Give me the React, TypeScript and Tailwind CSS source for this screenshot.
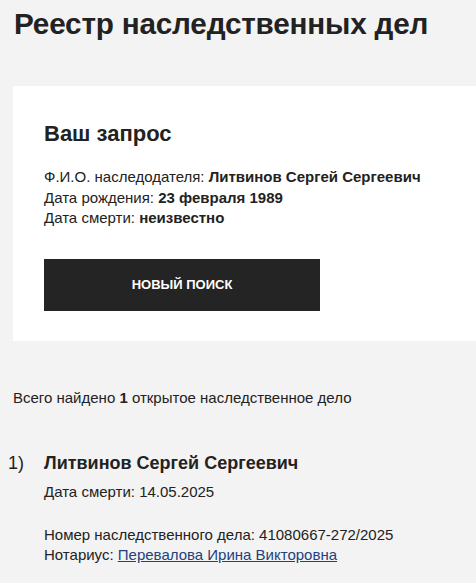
import React from 'react';

const App: React.FC = () => {
  return (
    <div className="min-h-screen bg-[#f3f3f3] text-[#222] font-['Liberation_Sans',Arial,sans-serif] overflow-hidden">
      <h1 className="pl-[14px] pt-[6px] text-[29.7px] leading-[36px] font-bold tracking-[-0.2px] text-[#222]">
        Реестр наследственных дел
      </h1>

      <section className="mt-[44px] ml-[13px] bg-white pl-[31px] pt-[34px] pb-[30px]">
        <h2 className="text-[22px] leading-[28px] font-bold">Ваш запрос</h2>
        <div className="mt-[19px] text-[15px] leading-[20.5px]">
          <p>
            Ф.И.О. наследодателя: <b>Литвинов Сергей Сергеевич</b>
          </p>
          <p>
            Дата рождения: <b>23 февраля 1989</b>
          </p>
          <p>
            Дата смерти: <b>неизвестно</b>
          </p>
        </div>
        <button className="mt-[30px] w-[276px] h-[52px] bg-[#242424] text-white text-[13px] font-bold uppercase">
          Новый поиск
        </button>
      </section>

      <p className="mt-[47px] pl-[13px] text-[15px] leading-[20px]">
        Всего найдено <b>1</b> открытое наследственное дело
      </p>

      <div className="mt-[43px] flex">
        <span className="w-[44px] pl-[8px] text-[18px] leading-[24px]">1)</span>
        <div>
          <h3 className="text-[18px] leading-[24px] font-bold">Литвинов Сергей Сергеевич</h3>
          <p className="mt-[7px] text-[15px] leading-[20px]">Дата смерти: 14.05.2025</p>
          <p className="mt-[23px] text-[15px] leading-[20px]">
            Номер наследственного дела: 41080667-272/2025
          </p>
          <p className="text-[15px] leading-[20px]">
            Нотариус:{' '}
            <a href="#" className="text-[#22417f] underline">
              Перевалова Ирина Викторовна
            </a>
          </p>
        </div>
      </div>
    </div>
  );
};

export default App;
